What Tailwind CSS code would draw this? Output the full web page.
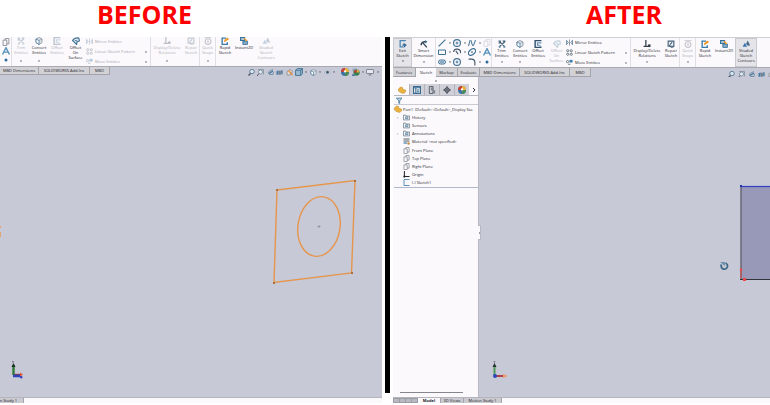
<!DOCTYPE html>
<html lang="en">
<head>
    <meta charset="UTF-8">
    <meta name="viewport" content="width=device-width, initial-scale=1.0">
    <title>Sketch view - Before / After</title>
    <script src="https://cdn.jsdelivr.net/npm/@tailwindcss/browser@4"></script>
</head>
<body class="bg-white min-h-screen flex flex-col pb-0.5 overflow-hidden font-['Open_Sans','Noto_Sans',sans-serif] text-[4px] leading-[5px] font-medium text-[#24242c]">

    <!-- Icon set -->
    <svg class="hidden">
        <symbol id="trim" viewBox="1 1 14 14"><path d="M2 3h4M2 6h5M9 3h5M3 13l10-9M4 4l9 9" stroke="#3f5e78" stroke-width="2" fill="none"/><circle cx="4" cy="13" r="2" fill="#6c8da6"/><circle cx="12" cy="13" r="2" fill="#6c8da6"/></symbol>
        <symbol id="convert" viewBox="1 0 14 16"><path d="M8 1l6 3v7l-6 4-6-4V4z" fill="#dfe5ec" stroke="#7b8793" stroke-width="1.5"/><path d="M2 4l6 3v8l-6-4z" fill="#fff" stroke="#3d7199" stroke-width="1.5"/><path d="M8 7l6-3" stroke="#7b8793"/></symbol>
        <symbol id="offset" viewBox="1 1 14 14"><path d="M14 2H3v12h11" fill="none" stroke="#33506b" stroke-width="2.5"/><path d="M14 6H7v4h3M10 10l4 4" fill="none" stroke="#6e93b0" stroke-width="2"/></symbol>
        <symbol id="surface" viewBox="1 1 14 14"><path d="M2 7q4-6 11-4l1 5q-5 0-5 6l-4-4z" fill="#dbe6ee" stroke="#3f7195" stroke-width="2"/><path d="M6 7q4-1 4 3" fill="none" stroke="#3f7195" stroke-width="1.5"/></symbol>
        <symbol id="mirror" viewBox="0 0 16 16"><path d="M8 1v14" stroke="#667" stroke-width="1.5"/><path d="M1 3l4 5-4 5zM15 3l-4 5 4 5z" fill="none" stroke="#4b7594" stroke-width="1.8"/></symbol>
        <symbol id="pattern" viewBox="0 0 16 16"><g fill="none" stroke="#52636f" stroke-width="1.8"><circle cx="4" cy="4" r="2.5"/><circle cx="12" cy="4" r="2.5"/><circle cx="4" cy="12" r="2.5"/><circle cx="12" cy="12" r="2.5"/></g></symbol>
        <symbol id="move" viewBox="0 0 16 16"><circle cx="3.500" cy="6" r="2.500" fill="none" stroke="#52636f" stroke-width="1.8"/><path d="M5 12h5" stroke="#52636f" stroke-width="2"/><rect x="8" y="2" width="7" height="6" fill="#3f7cb0"/></symbol>
        <symbol id="relations" viewBox="1 1 14 14"><path d="M6 1v11M2 12h10" stroke="#33414f" stroke-width="2.2"/><circle cx="12" cy="11" r="2.5" fill="#33414f"/></symbol>
        <symbol id="repair" viewBox="1 0 14 14"><path d="M3 2h10v9H3z" fill="#eef2f6" stroke="#456079" stroke-width="2"/><path d="M6 8l4-4M5 9q4 6 8 2" fill="none" stroke="#456079" stroke-width="2"/></symbol>
        <symbol id="snaps" viewBox="1 1 14 14"><circle cx="8" cy="9" r="5" fill="none" stroke="#556" stroke-width="2"/><circle cx="8" cy="9" r="1.8" fill="#556"/><path d="M2 2h12" stroke="#556" stroke-width="1.5"/></symbol>
        <symbol id="rapid" viewBox="1 1 14 14"><path d="M10 3H3v11h9v-4" fill="none" stroke="#3a7cab" stroke-width="2.4"/><path d="M6 10l1-4 6-4 2 3-6 4z" fill="#ef9a2f"/></symbol>
        <symbol id="instant" viewBox="1 1 14 14"><path d="M2 2h7v5H2z" fill="#cfe0ec" stroke="#397199" stroke-width="2"/><path d="M6 8h8v6H6z" fill="#83abc6" stroke="#397199" stroke-width="1.5"/><path d="M8 3l5 5" stroke="#ef9a2f" stroke-width="2.4"/></symbol>
        <symbol id="shaded" viewBox="1 1 14 14"><path d="M2 13l4-7 4 7z" fill="#3977b4"/><path d="M8 8l3-6 4 8q-3 3-7-2z" fill="#466889"/></symbol>
        <symbol id="exit" viewBox="1 1 14 14"><path d="M13 2H3v11h5" fill="none" stroke="#4b86b4" stroke-width="2.2"/><path d="M7 10h7M13 10l-4-3M13 10l-4 4" stroke="#2d6493" stroke-width="2"/></symbol>
        <symbol id="dimension" viewBox="1 1 14 14"><path d="M3 10q0-7 9-6" fill="none" stroke="#33414f" stroke-width="2.6"/><path d="M10 1l4 3-4 3z" fill="#3f7195"/><path d="M6 6l7 8" stroke="#33414f" stroke-width="2.2"/></symbol>
        <symbol id="line" viewBox="1 1 14 14"><path d="M2 14L14 2" stroke="#3f7195" stroke-width="2"/></symbol>
        <symbol id="circle" viewBox="1 1 14 14"><circle cx="8" cy="8" r="6" fill="none" stroke="#3f7195" stroke-width="2"/><path d="M8 5.500v5M5.500 8h5" stroke="#3f7195" stroke-width="1.6"/></symbol>
        <symbol id="spline" viewBox="0 1 16 14"><path d="M1 14L4 3q1-2 2 0l3 10q1 2 2 0l4-11" fill="none" stroke="#3f7195" stroke-width="2"/></symbol>
        <symbol id="rect" viewBox="0 0 16 16"><path d="M1 4h14v9H1z" fill="none" stroke="#3f7195" stroke-width="2"/></symbol>
        <symbol id="arc" viewBox="1 1 14 14"><path d="M2 8q1-6 7-5t5 7M6 6l4 6" fill="none" stroke="#42566a" stroke-width="2"/></symbol>
        <symbol id="ellipse" viewBox="1 1 14 14"><ellipse cx="8" cy="8" rx="7" ry="4.5" transform="rotate(-40 8 8)" fill="none" stroke="#3f7195" stroke-width="2"/><circle cx="8" cy="8" r="1.5" fill="#42566a"/></symbol>
        <symbol id="slot" viewBox="0 0 16 16"><rect x="1" y="4" width="14" height="8" rx="4" fill="#dbe6ee" stroke="#3f7195" stroke-width="2"/><path d="M4 8h8" stroke="#3f7195" stroke-width="2"/></symbol>
        <symbol id="fillet" viewBox="1 1 14 14"><path d="M2 3h5q6 0 6 6v5" fill="none" stroke="#42566a" stroke-width="2"/></symbol>
        <symbol id="plane" viewBox="1 0 15 15"><path d="M3 4h7v10H3zM10 11h4V1H7v3" fill="none" stroke="#7d828a" stroke-width="1.5"/></symbol>
        <symbol id="letter" viewBox="1 1 14 14"><path d="M2 14L8 2l6 12M4 10h8" fill="none" stroke="#5b94bb" stroke-width="2.4"/></symbol>
        <symbol id="point" viewBox="0 0 16 16"><circle cx="8" cy="8" r="3" fill="#2f6c9c"/></symbol>
        <symbol id="zoom" viewBox="1 1 14 14"><circle cx="9" cy="6" r="4.5" fill="#d9e6f0" stroke="#537590" stroke-width="1.8"/><path d="M6 10l-4 4" stroke="#414e5b" stroke-width="2.4"/></symbol>
        <symbol id="zoomarea" viewBox="1 1 14 14"><path d="M3 2h11v10" fill="none" stroke="#808b96" stroke-width="1.5"/><circle cx="8" cy="7" r="4" fill="#e4edf3" stroke="#6f8699" stroke-width="1.6"/><path d="M5 10l-4 5" stroke="#556" stroke-width="2"/></symbol>
        <symbol id="prev" viewBox="1 1 14 14"><path d="M13 2L5 6q-3 4 1 6h7l1-5" fill="none" stroke="#6c8ba2" stroke-width="1.8"/><path d="M13 5l-8 5" stroke="#3f7195" stroke-width="2.2"/></symbol>
        <symbol id="section" viewBox="0 1 16 14"><path d="M1 5l5-2v10H1z" fill="#4a7ba3"/><path d="M7 4h4v9H7z" fill="#6d7985"/><path d="M12 3h3v9h-3z" fill="#397199"/></symbol>
        <symbol id="dynamic" viewBox="1 1 14 14"><path d="M3 6l6-4 5 4-5 7H3z" fill="#e8dccd" stroke="#7b8793" stroke-width="1.5"/><path d="M6 4l8 9" stroke="#e38a3b" stroke-width="2.4"/></symbol>
        <symbol id="cube" viewBox="1 1 14 14"><path d="M5 2h9v9l-3 3H2V5z" fill="#9dbbd0" stroke="#3f7195" stroke-width="1.6"/><path d="M2 5h9v9M11 5l3-3" fill="none" stroke="#3f7195" stroke-width="1.6"/></symbol>
        <symbol id="eye" viewBox="0 0 16 16"><path d="M1 8q7-8 14 0-7 7-14 0z" fill="#dde3e9" stroke="#8994a0"/><circle cx="8" cy="7.500" r="3" fill="#38536c"/></symbol>
        <symbol id="ball" viewBox="1 1 14 14"><circle cx="8" cy="8" r="7" fill="#3b72a8"/><path d="M8 8V1a7 7 0 0 1 7 7z" fill="#efb63b"/><path d="M8 8H1a7 7 0 0 1 7-7z" fill="#c94336"/><path d="M8 8h7a7 7 0 0 1-7 7z" fill="#4c8c56"/><circle cx="8" cy="7" r="2" fill="#fff"/></symbol>
        <symbol id="scene" viewBox="1 1 14 14"><path d="M2 2h8v5H2z" fill="#89a7b7"/><circle cx="9" cy="9" r="5.500" fill="#34804e"/><path d="M9 9V4a5 5 0 0 1 5 5z" fill="#e9a742"/><path d="M9 9H4a5 5 0 0 1 5-5z" fill="#bf4238"/><path d="M1 12h5v3H1z" fill="#4779a5"/></symbol>
        <symbol id="monitor" viewBox="0 0 16 16"><rect x="1" y="3" width="14" height="8" rx="1" fill="#e6e8ef" stroke="#6e7580" stroke-width="1.6"/><path d="M5 14h6M8 11v3" stroke="#6e7580" stroke-width="1.6"/></symbol>
        <symbol id="part" viewBox="0 0 16 16"><path d="M1 6l4-4 4 1 1 4 5 1v4l-4 3-6-2-4-3z" fill="#e9b33c" stroke="#b5822a" stroke-width="1"/></symbol>
        <symbol id="property" viewBox="1 1 14 14"><path d="M2 2h12v12H2z" fill="#f3f6f9" stroke="#3d6c92" stroke-width="2"/><path d="M2 4h12M6 4v10M8 8h4M8 11h4" stroke="#3d6c92" stroke-width="2"/></symbol>
        <symbol id="config" viewBox="1 0 14 15"><path d="M3 1h7v13H3zM6 4h3M6 7h3" fill="none" stroke="#555f69" stroke-width="1.8"/><path d="M9 8h5v6H9z" fill="#7f8790"/></symbol>
        <symbol id="target" viewBox="0 0 16 16"><circle cx="8" cy="8" r="4.500" fill="none" stroke="#333b44" stroke-width="2"/><path d="M8 0v16M0 8h16" stroke="#333b44" stroke-width="1.6"/></symbol>
        <symbol id="filter" viewBox="0 0 16 16"><path d="M1 2h14L9 9v6H7V9z" fill="#c5d8e6" stroke="#43769b" stroke-width="2"/></symbol>
        <symbol id="folder" viewBox="0 1 16 15"><path d="M1 3h5l1 2h8v9H1z" fill="#eef1f4" stroke="#667482" stroke-width="1.6"/><path d="M6 7h5v4H6z" fill="none" stroke="#3d6c92" stroke-width="1.6"/></symbol>
        <symbol id="material" viewBox="1 1 14 14"><path d="M2 3h12M2 7h12" stroke="#555f69" stroke-width="2"/><path d="M2 11h7" stroke="#3f7cb0" stroke-width="2.4"/><circle cx="12" cy="12" r="2.500" fill="#c78f3a"/></symbol>
        <symbol id="origin" viewBox="1 1 15 15"><path d="M4 1v12h11" fill="none" stroke="#22262c" stroke-width="2.2"/><circle cx="4" cy="13" r="2.400" fill="#22262c"/></symbol>
        <symbol id="sketch" viewBox="1 1 14 14"><path d="M14 2H3v12h11" fill="none" stroke="#4b86b4" stroke-width="1.8"/></symbol>
        <symbol id="caret" viewBox="0 0 4 4"><path d="M0 1h4L2 4z" fill="#50505a"/></symbol>
    </svg>

    <!-- Titles -->
    <header class="grid grid-cols-[382fr_5px_377fr] gap-x-[3px] h-[37px] shrink-0 text-[25px] leading-[29px] font-bold text-[#ff0000]">
        <h1 class="pl-[97px]">BEFORE</h1>
        <span></span>
        <h1 class="pl-[193px]">AFTER</h1>
    </header>

    <main class="grid grid-cols-[382fr_5px_377fr] gap-x-[3px] flex-1">

        <!-- Before -->
        <section class="flex flex-col min-w-0 overflow-hidden bg-[#c8c9d7]">
            <div class="flex h-[30px] shrink-0 bg-[#fbf9fc] border-b border-[#a9a9b2] whitespace-nowrap">
                <div class="w-3 shrink-0 flex flex-col justify-between items-center pt-px pb-0.5 border-r border-[#e0dfe4]">
                    <svg class="size-2"><use href="#plane"/></svg>
                    <svg class="size-2"><use href="#letter"/></svg>
                    <svg class="size-2"><use href="#point"/></svg>
                </div>
                <button class="w-[18px] shrink-0 flex flex-col items-center pb-1 text-[#b0b0b8]"><svg class="size-2 opacity-30"><use href="#trim"/></svg><span>Trim<br>Entities</span><svg class="mt-auto size-0.5"><use href="#caret"/></svg></button>
                <button class="w-[18px] shrink-0 flex flex-col items-center pb-1"><svg class="size-2"><use href="#convert"/></svg><span>Convert<br>Entities</span><svg class="mt-auto size-0.5"><use href="#caret"/></svg></button>
                <button class="w-[18px] shrink-0 flex flex-col items-center text-[#b0b0b8]"><svg class="size-2 opacity-30"><use href="#offset"/></svg><span>Offset<br>Entities</span></button>
                <button class="w-[19px] shrink-0 flex flex-col items-center"><svg class="size-2"><use href="#surface"/></svg><span>Offset<br>On<br>Surface</span></button>
                <div class="w-[66px] shrink-0 flex flex-col justify-between py-px pl-px pr-[3px] border-r border-[#e0dfe4] text-[#a3a3ac]">
                    <button class="flex items-center gap-0.5"><svg class="size-[7px] opacity-40"><use href="#mirror"/></svg>Mirror Entities</button>
                    <button class="flex items-center gap-0.5"><svg class="size-[7px] opacity-40"><use href="#pattern"/></svg>Linear Sketch Pattern<svg class="ml-auto size-0.5"><use href="#caret"/></svg></button>
                    <button class="flex items-center gap-0.5"><svg class="size-[7px] opacity-40"><use href="#move"/></svg>Move Entities<svg class="ml-auto size-0.5"><use href="#caret"/></svg></button>
                </div>
                <button class="w-8 shrink-0 flex flex-col items-center pb-1 text-[#b0b0b8]"><svg class="size-2 opacity-30"><use href="#relations"/></svg><span>Display/Delete<br>Relations</span><svg class="mt-auto size-0.5"><use href="#caret"/></svg></button>
                <button class="w-[17px] shrink-0 flex flex-col items-center border-r border-[#e0dfe4] text-[#b0b0b8]"><svg class="size-2 opacity-30"><use href="#repair"/></svg><span>Repair<br>Sketch</span></button>
                <button class="w-4 shrink-0 flex flex-col items-center pb-1 border-r border-[#e0dfe4] text-[#b0b0b8]"><svg class="size-2 opacity-30"><use href="#snaps"/></svg><span>Quick<br>Snaps</span><svg class="mt-auto size-0.5"><use href="#caret"/></svg></button>
                <button class="w-[18px] shrink-0 flex flex-col items-center"><svg class="size-2"><use href="#rapid"/></svg><span>Rapid<br>Sketch</span></button>
                <button class="w-5 shrink-0 flex flex-col items-center"><svg class="size-2"><use href="#instant"/></svg><span>Instant2D</span></button>
                <button class="w-6 shrink-0 flex flex-col items-center text-[#b0b0b8]"><svg class="size-2 opacity-30"><use href="#shaded"/></svg><span>Shaded<br>Sketch<br>Contours</span></button>
            </div>

            <div class="flex h-2 shrink-0 whitespace-nowrap">
                <button class="w-[39px] shrink-0 bg-[#d2d1d6] border-r border-b border-[#a4a4ad]">MBD Dimensions</button>
                <button class="w-[51px] shrink-0 bg-[#d2d1d6] border-r border-b border-[#a4a4ad]">SOLIDWORKS Add-Ins</button>
                <button class="w-5 shrink-0 bg-[#d2d1d6] border-r border-b border-[#a4a4ad]">MBD</button>
                <div class="ml-auto w-[134px] flex justify-between items-center pt-0.5">
                    <svg class="size-[7px]"><use href="#zoom"/></svg>
                    <svg class="size-[7px]"><use href="#zoomarea"/></svg>
                    <svg class="size-[7px]"><use href="#prev"/></svg>
                    <svg class="size-[7px]"><use href="#section"/></svg>
                    <svg class="size-[7px]"><use href="#dynamic"/></svg>
                    <svg class="size-2"><use href="#cube"/></svg>
                    <svg class="size-0.5"><use href="#caret"/></svg>
                    <svg class="size-[7px]"><use href="#convert"/></svg>
                    <svg class="size-0.5"><use href="#caret"/></svg>
                    <svg class="size-[7px]"><use href="#eye"/></svg>
                    <svg class="size-0.5"><use href="#caret"/></svg>
                    <svg class="ml-1 size-2"><use href="#ball"/></svg>
                    <svg class="size-2"><use href="#scene"/></svg>
                    <svg class="size-0.5"><use href="#caret"/></svg>
                    <svg class="size-2"><use href="#monitor"/></svg>
                    <svg class="mr-[3px] size-0.5"><use href="#caret"/></svg>
                </div>
            </div>

            <!-- Viewport -->
            <div class="relative flex-1">
                <svg class="absolute inset-0 size-full" viewBox="0 75 382 322" fill="none">
                    <path d="M277 190L355 180.500L351.500 273L274 282.500Z" stroke="#e5964c" stroke-width="1.400"/>
                    <ellipse cx="319" cy="226.500" rx="21" ry="30" transform="rotate(9 319 226.500)" stroke="#e5964c" stroke-width="1.400"/>
                    <path d="M276 189h2v2h-2zM354 180h2v2h-2zM351 272h2v2h-2zM273 282h2v2h-2z" fill="#a8713d"/>
                    <path d="M317.500 226.500h3M319 225v3" stroke="#8f8f99" stroke-width="0.800"/>
                    <path d="M0 226h1v2H0zM0 232h1v5H0z" fill="#dfa477"/>
                    <path d="M13.500 375v-10" stroke="#2b7c37" stroke-width="2.400"/>
                    <path d="M13.500 363l-2 4h4z" fill="#24302a"/>
                    <path d="M14 375h7" stroke="#8f3c44" stroke-width="2.400"/>
                    <path d="M13 376h7l2 2" stroke="#2b43c0" stroke-width="2.400"/>
                    <path d="M20 372.500l3 2-3 2z" fill="#e0563f"/>
                    <path d="M12 361l1 1 1-1M13 362v1.500" stroke="#666670" stroke-width="0.700"/>
                </svg>
            </div>

            <div class="flex h-1.5 shrink-0 bg-[#fbf9fc] border-t border-[#b5b5be]">
                <button class="w-6 bg-[#cbcad0] border-r border-[#a4a4ad] overflow-hidden whitespace-nowrap flex justify-end pr-1.5">Motion Study 1</button>
            </div>
        </section>

        <!-- Separator -->
        <div class="bg-black mb-2.5"></div>

        <!-- After -->
        <section class="flex flex-col min-w-0 overflow-hidden bg-[#c8c9d7]">
            <div class="flex h-[31px] shrink-0 bg-[#fbf9fc] border-t border-t-[#cfced4] border-b border-b-[#a9a9b2] whitespace-nowrap">
                <button class="w-[19px] shrink-0 flex flex-col items-center pt-px pb-1 bg-[#e4e4e9] border border-[#c9c9d0]"><svg class="size-2"><use href="#exit"/></svg><span>Exit<br>Sketch</span><svg class="mt-auto size-0.5"><use href="#caret"/></svg></button>
                <button class="w-6 shrink-0 flex flex-col items-center pt-0.5 pb-1 border-r border-[#e0dfe4]"><svg class="size-2"><use href="#dimension"/></svg><span>Smart<br>Dimension</span><svg class="mt-auto size-0.5"><use href="#caret"/></svg></button>
                <div class="w-14 shrink-0 grid grid-cols-[8px_7px_8px_7px_8px_7px_8px] items-center pl-0.5 border-r border-[#e0dfe4]">
                    <svg class="size-2"><use href="#line"/></svg><svg class="mx-auto size-0.5"><use href="#caret"/></svg>
                    <svg class="size-2"><use href="#circle"/></svg><svg class="mx-auto size-0.5"><use href="#caret"/></svg>
                    <svg class="size-2"><use href="#spline"/></svg><svg class="mx-auto size-0.5"><use href="#caret"/></svg>
                    <svg class="size-2 opacity-30"><use href="#plane"/></svg>
                    <svg class="size-2"><use href="#rect"/></svg><svg class="mx-auto size-0.5"><use href="#caret"/></svg>
                    <svg class="size-2"><use href="#arc"/></svg><svg class="mx-auto size-0.5"><use href="#caret"/></svg>
                    <svg class="size-2"><use href="#ellipse"/></svg><svg class="mx-auto size-0.5"><use href="#caret"/></svg>
                    <svg class="size-2"><use href="#letter"/></svg>
                    <svg class="size-2"><use href="#slot"/></svg><svg class="mx-auto size-0.5"><use href="#caret"/></svg>
                    <svg class="size-2"><use href="#circle"/></svg><span></span>
                    <svg class="size-2"><use href="#fillet"/></svg><svg class="mx-auto size-0.5"><use href="#caret"/></svg>
                    <svg class="size-2"><use href="#point"/></svg>
                </div>
                <button class="w-[19px] shrink-0 flex flex-col items-center pt-0.5 pb-1"><svg class="size-2"><use href="#trim"/></svg><span>Trim<br>Entities</span><svg class="mt-auto size-0.5"><use href="#caret"/></svg></button>
                <button class="w-[18px] shrink-0 flex flex-col items-center pt-0.5 pb-1"><svg class="size-2"><use href="#convert"/></svg><span>Convert<br>Entities</span><svg class="mt-auto size-0.5"><use href="#caret"/></svg></button>
                <button class="w-[18px] shrink-0 flex flex-col items-center pt-0.5"><svg class="size-2"><use href="#offset"/></svg><span>Offset<br>Entities</span></button>
                <button class="w-[19px] shrink-0 flex flex-col items-center pt-0.5 text-[#b0b0b8]"><svg class="size-2 opacity-30"><use href="#surface"/></svg><span>Offset<br>On<br>Surface</span></button>
                <div class="w-[65px] shrink-0 flex flex-col justify-between py-px pr-[3px] border-r border-[#e0dfe4]">
                    <button class="flex items-center gap-0.5"><svg class="size-[7px]"><use href="#mirror"/></svg>Mirror Entities</button>
                    <button class="flex items-center gap-0.5"><svg class="size-[7px]"><use href="#pattern"/></svg>Linear Sketch Pattern<svg class="ml-auto size-0.5"><use href="#caret"/></svg></button>
                    <button class="flex items-center gap-0.5"><svg class="size-[7px]"><use href="#move"/></svg>Move Entities<svg class="ml-auto size-0.5"><use href="#caret"/></svg></button>
                </div>
                <button class="w-8 shrink-0 flex flex-col items-center pt-0.5 pb-1"><svg class="size-2"><use href="#relations"/></svg><span>Display/Delete<br>Relations</span><svg class="mt-auto size-0.5"><use href="#caret"/></svg></button>
                <button class="w-[17px] shrink-0 flex flex-col items-center pt-0.5 border-r border-[#e0dfe4]"><svg class="size-2"><use href="#repair"/></svg><span>Repair<br>Sketch</span></button>
                <button class="w-4 shrink-0 flex flex-col items-center pt-0.5 pb-1 border-r border-[#e0dfe4] text-[#b0b0b8]"><svg class="size-2 opacity-30"><use href="#snaps"/></svg><span>Quick<br>Snaps</span><svg class="mt-auto size-0.5"><use href="#caret"/></svg></button>
                <button class="w-[18px] shrink-0 flex flex-col items-center pt-0.5"><svg class="size-2"><use href="#rapid"/></svg><span>Rapid<br>Sketch</span></button>
                <button class="w-5 shrink-0 flex flex-col items-center pt-0.5"><svg class="size-2"><use href="#instant"/></svg><span>Instant2D</span></button>
                <button class="w-[22px] ml-px shrink-0 flex flex-col items-center pt-px bg-[#e4e4e9] border border-[#c9c9d0]"><svg class="size-2"><use href="#shaded"/></svg><span>Shaded<br>Sketch<br>Contours</span></button>
            </div>

            <div class="flex h-[9px] shrink-0 whitespace-nowrap">
                <button class="w-[23px] shrink-0 bg-[#d2d1d6] border-r border-b border-[#a4a4ad]">Features</button>
                <button class="w-5 shrink-0 bg-[#fbf9fc]">Sketch</button>
                <button class="w-[22px] shrink-0 bg-[#d2d1d6] border-r border-b border-[#a4a4ad]">Markup</button>
                <button class="w-[22px] shrink-0 bg-[#d2d1d6] border-r border-b border-[#a4a4ad]">Evaluate</button>
                <button class="w-10 shrink-0 bg-[#d2d1d6] border-r border-b border-[#a4a4ad]">MBD Dimensions</button>
                <button class="w-[50px] shrink-0 bg-[#d2d1d6] border-r border-b border-[#a4a4ad]">SOLIDWORKS Add-Ins</button>
                <button class="w-[21px] shrink-0 bg-[#d2d1d6] border-r border-b border-[#a4a4ad]">MBD</button>
                <div class="ml-auto w-[42px] flex gap-[3px] items-center pt-[3px] overflow-hidden">
                    <svg class="size-[7px] shrink-0"><use href="#zoom"/></svg>
                    <svg class="size-[7px] shrink-0"><use href="#zoomarea"/></svg>
                    <svg class="size-[7px] shrink-0"><use href="#prev"/></svg>
                    <svg class="size-[7px] shrink-0"><use href="#section"/></svg>
                    <svg class="size-[7px] shrink-0"><use href="#dynamic"/></svg>
                </div>
            </div>

            <div class="flex flex-1">
                <!-- Feature tree -->
                <aside class="w-[86px] shrink-0 flex flex-col pl-px bg-[#fbf9fc] border-r border-[#b9b9c3] whitespace-nowrap">
                    <div class="h-[7px] flex items-center justify-center"><span class="size-0.5 rounded-full bg-[#9a9aa3]"></span></div>
                    <div class="flex h-3 border-b border-[#b9b9c3] bg-[#d0d0d8]">
                        <button class="w-[15px] grid place-items-center bg-[#fbf9fc]"><svg class="size-2"><use href="#part"/></svg></button>
                        <button class="w-[15px] grid place-items-center border-l border-[#b3b3bc]"><svg class="size-2"><use href="#property"/></svg></button>
                        <button class="w-[15px] grid place-items-center border-l border-[#b3b3bc]"><svg class="size-2"><use href="#config"/></svg></button>
                        <button class="w-[15px] grid place-items-center border-l border-[#b3b3bc]"><svg class="size-2"><use href="#target"/></svg></button>
                        <button class="w-[15px] grid place-items-center border-l border-[#b3b3bc]"><svg class="size-2"><use href="#ball"/></svg></button>
                        <button class="flex-1 grid place-items-center bg-[#fbf9fc]"><svg class="h-1.5 w-1" viewBox="0 0 4 6"><path d="M1 1l2 2-2 2" fill="none" stroke="#33333c"/></svg></button>
                    </div>
                    <label class="flex items-center h-[9px] pl-0.5 border-b border-[#c9c9d0]">
                        <svg class="size-[7px]"><use href="#filter"/></svg>
                        <input type="text" aria-label="Filter" class="w-full h-1.5 outline-none">
                    </label>
                    <ul class="h-[83px] flex flex-col justify-between border-b border-[#b1b7cc] overflow-hidden">
                        <li class="h-2 flex items-center gap-px"><svg class="size-2 shrink-0"><use href="#part"/></svg>Part1 &nbsp;(Default&lt;&lt;Default&gt;_Display Sta</li>
                        <li class="h-2 flex items-center gap-0.5 pl-[3px]"><span class="w-1">›</span><svg class="size-[7px]"><use href="#folder"/></svg>History</li>
                        <li class="h-2 flex items-center gap-0.5 pl-[9px]"><svg class="size-[7px]"><use href="#folder"/></svg>Sensors</li>
                        <li class="h-2 flex items-center gap-0.5 pl-[3px]"><span class="w-1">›</span><svg class="size-[7px]"><use href="#folder"/></svg>Annotations</li>
                        <li class="h-2 flex items-center gap-0.5 pl-[9px]"><svg class="size-[7px]"><use href="#material"/></svg>Material &lt;not specified&gt;</li>
                        <li class="h-2 flex items-center gap-0.5 pl-[9px]"><svg class="size-[7px]"><use href="#plane"/></svg>Front Plane</li>
                        <li class="h-2 flex items-center gap-0.5 pl-[9px]"><svg class="size-[7px]"><use href="#plane"/></svg>Top Plane</li>
                        <li class="h-2 flex items-center gap-0.5 pl-[9px]"><svg class="size-[7px]"><use href="#plane"/></svg>Right Plane</li>
                        <li class="h-2 flex items-center gap-0.5 pl-[9px]"><svg class="size-[7px]"><use href="#origin"/></svg>Origin</li>
                        <li class="h-2 flex items-center gap-0.5 pl-[9px]"><svg class="size-[7px]"><use href="#sketch"/></svg>(-) Sketch1</li>
                    </ul>
                    <div class="mt-auto mb-1 ml-1.5 w-[63px] h-px bg-[#85858d]"></div>
                </aside>

                <!-- Viewport -->
                <div class="relative flex-1">
                    <svg class="absolute inset-0 size-full" viewBox="479 77 291 320" fill="none">
                        <path d="M741 186h29v93h-29z" fill="#9898b8"/>
                        <path d="M741 186v93" stroke="#63636f" stroke-width="1.400"/>
                        <path d="M740 186.500h30" stroke="#2f3fbd" stroke-width="1.200"/>
                        <path d="M740 185h2v2h-2z" fill="#2336a8"/>
                        <path d="M740 279.500h30" stroke="#33333c"/>
                        <path d="M741 269v9" stroke="#e04444"/>
                        <path d="M739.500 270.500l1.500-3 1.500 3zM743 278h3v3h-3z" fill="#f04848"/>
                        <path d="M721.500 264.500a3.200 3.200 0 1 0 4-1.500" stroke="#3e6987" stroke-width="1.800"/>
                        <path d="M720 262h5v4z" fill="#6d93aa"/>
                        <path d="M494.500 375v-9" stroke="#4f9b55" stroke-width="2"/>
                        <path d="M494.500 363l-2 4h4z" fill="#24302a"/>
                        <path d="M496 376h8" stroke="#b04343" stroke-width="2"/>
                        <path d="M503 374l5 2-5 2z" fill="#ea9a70"/>
                        <circle cx="495" cy="376" r="2" fill="#2d45bd"/>
                        <path d="M493.500 361l1 1 1-1M494.500 362v1.500" stroke="#666670" stroke-width="0.700"/>
                    </svg>
                    <button aria-label="Collapse panel" class="absolute -left-px top-[148px] w-[3px] h-[15px] bg-[#fbf9fc] border border-l-0 border-[#b9b9c3] grid place-items-center"><span class="w-px h-0.5 bg-[#9a9aa3]"></span></button>
                </div>
            </div>

            <div class="flex h-1.5 shrink-0 bg-[#fbf9fc] border-t border-[#b5b5be] whitespace-nowrap">
                <div class="w-[25px] grid grid-cols-4 gap-px bg-[#9d9da6] p-px">
                    <span class="bg-[#b9b9c1]"></span><span class="bg-[#b9b9c1]"></span><span class="bg-[#b9b9c1]"></span><span class="bg-[#b9b9c1]"></span>
                </div>
                <button class="w-[22px] font-bold text-[#22222a]">Model</button>
                <button class="w-6 bg-[#cbcad0] border-x border-[#a4a4ad]">3D Views</button>
                <button class="w-[38px] bg-[#cbcad0] border-r border-[#a4a4ad]">Motion Study 1</button>
            </div>
        </section>
    </main>
</body>
</html>
